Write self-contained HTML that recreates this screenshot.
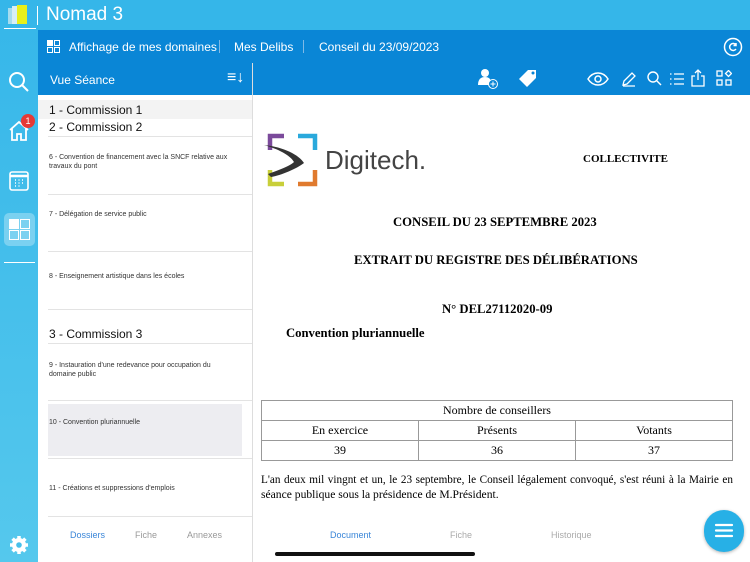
<!DOCTYPE html>
<html><head><meta charset="utf-8"><style>
*{margin:0;padding:0;box-sizing:border-box}
body{width:750px;height:562px;overflow:hidden;position:relative;background:#fff;font-family:"Liberation Sans",sans-serif}
.a{position:absolute}
.side{left:0;top:0;width:38px;height:562px;background:linear-gradient(#35b6e9,#55c8ed)}
.top{left:38px;top:0;width:712px;height:30px;background:#35b6e9}
.nav{left:38px;top:30px;width:712px;height:33px;background:#0a86d6;color:#fff;font-size:12px}
.tb{left:38px;top:63px;width:712px;height:32px;background:#0a86d6}
.li{color:#333;font-size:7px;line-height:9px}
.sep{height:1px;background:#e3e3e3;left:48px;width:204px}
.h{font-size:12px;color:#111;left:49px}
.doc{font-family:"Liberation Serif",serif;color:#000;white-space:nowrap}
td{border:1px solid #999;text-align:center;font-family:"Liberation Serif",serif;font-size:12px;height:20px}
table{border-collapse:collapse}
</style></head><body>
<div class="a side"></div>
<div class="a top"></div>
<div class="a" style="left:8px;top:8px;width:6px;height:16px;background:#a6dcef"></div>
<div class="a" style="left:12px;top:6px;width:8px;height:18px;background:#d7eef6"></div>
<div class="a" style="left:17px;top:5px;width:10px;height:19px;background:#e8ef1a"></div>
<div class="a" style="left:4px;top:28px;width:32px;height:1px;background:#fff"></div>
<div class="a" style="left:37px;top:6px;width:1px;height:19px;background:#fff"></div>
<div class="a" style="left:46px;top:4px;color:#fff;font-size:19px">Nomad 3</div>
<div class="a nav"></div>
<svg class="a" style="left:47px;top:40px" width="13" height="13" viewBox="0 0 13 13" fill="none" stroke="#fff" stroke-width="1"><rect x="0.5" y="0.5" width="5" height="5" fill="#fff"/><rect x="7.5" y="0.5" width="5" height="5"/><rect x="0.5" y="7.5" width="5" height="5"/><rect x="7.5" y="7.5" width="5" height="5"/></svg>
<div class="a" style="left:69px;top:40px;color:#fff;font-size:12px">Affichage de mes domaines</div>
<div class="a" style="left:219px;top:40px;width:1px;height:13px;background:#7fb9e6"></div>
<div class="a" style="left:234px;top:40px;color:#fff;font-size:12px">Mes Delibs</div>
<div class="a" style="left:303px;top:40px;width:1px;height:13px;background:#7fb9e6"></div>
<div class="a" style="left:319px;top:40px;color:#fff;font-size:12px">Conseil du 23/09/2023</div>
<svg class="a" style="left:723px;top:37px" width="20" height="20" viewBox="0 0 20 20" fill="none" stroke="#fff" stroke-width="1.5"><circle cx="10" cy="10" r="8.5"/><path d="M13 8a3.5 3.5 0 1 0 0 4M13 6v2.5h-2.5"/></svg>
<div class="a tb"></div>
<div class="a" style="left:252px;top:63px;width:1px;height:499px;background:#ddd"></div>
<div class="a" style="left:50px;top:73px;color:#fff;font-size:12px">Vue Séance</div>
<div class="a" style="left:227px;top:70px;color:#fff;font-size:16px;line-height:16px">≡↓</div>
<svg class="a" style="left:477px;top:68px" width="22" height="22" viewBox="0 0 22 22" fill="#fff"><circle cx="8" cy="5" r="4"/><path d="M1 17c0-6 3-8 7-8s6 2 6 6v2z"/><circle cx="16" cy="16" r="4.5" fill="#0a86d6" stroke="#fff"/><path d="M16 13.5v5M13.5 16h5" stroke="#fff"/></svg>
<svg class="a" style="left:518px;top:68px" width="22" height="22" viewBox="0 0 22 22" fill="#fff"><path d="M10 2h8v8L9 19 1 11z"/><circle cx="15" cy="5" r="1.5" fill="#0a86d6"/></svg>
<svg class="a" style="left:587px;top:71px" width="22" height="16" viewBox="0 0 22 16" fill="none" stroke="#fff" stroke-width="1.5"><path d="M1 8c5-8 15-8 20 0-5 8-15 8-20 0z"/><circle cx="11" cy="8" r="3"/></svg>
<svg class="a" style="left:621px;top:71px" width="16" height="16" viewBox="0 0 16 16" fill="none" stroke="#fff" stroke-width="1.3"><path d="M2 14l1-4 8-8 3 3-8 8zM2 15h12"/></svg>
<svg class="a" style="left:647px;top:71px" width="15" height="15" viewBox="0 0 15 15" fill="none" stroke="#fff" stroke-width="1.4"><circle cx="6" cy="6" r="5"/><path d="M10 10l4 4"/></svg>
<svg class="a" style="left:669px;top:72px" width="15" height="14" viewBox="0 0 15 14" fill="none" stroke="#fff" stroke-width="1.2"><path d="M5 2h10M5 7h10M5 12h10M1 2h1.5M1 7h1.5M1 12h1.5"/></svg>
<svg class="a" style="left:691px;top:69px" width="14" height="18" viewBox="0 0 14 18" fill="none" stroke="#fff" stroke-width="1.3"><path d="M4 7H1v10h12V7h-3M7 11V1M4 4l3-3 3 3"/></svg>
<svg class="a" style="left:716px;top:70px" width="16" height="16" viewBox="0 0 16 16" fill="none" stroke="#fff" stroke-width="1.3"><rect x="1" y="1" width="5" height="5"/><rect x="1" y="10" width="5" height="5"/><rect x="10" y="10" width="5" height="5"/><path d="M12.5 0.5l3 3-3 3-3-3z"/></svg>
<svg class="a" style="left:8px;top:71px" width="22" height="22" viewBox="0 0 22 22" fill="none" stroke="#fff" stroke-width="2"><circle cx="9" cy="9" r="7"/><path d="M14 14l6 6"/></svg>
<svg class="a" style="left:8px;top:120px" width="22" height="22" viewBox="0 0 22 22" fill="none" stroke="#fff" stroke-width="1.8"><path d="M2 10l9-8 9 8M4 8v12h5v-6h4v6h5V8"/></svg>
<div class="a" style="left:21px;top:114px;width:14px;height:14px;border-radius:7px;background:#e53935;color:#fff;font-size:9px;text-align:center;line-height:14px">1</div>
<svg class="a" style="left:9px;top:170px" width="20" height="21" viewBox="0 0 20 21" fill="none" stroke="#fff" stroke-width="1.6"><rect x="1" y="2" width="18" height="18" rx="2"/><path d="M1 6h18" stroke-width="2.5"/><path d="M6 10h1M9.5 10h1M13 10h1M6 13h1M9.5 13h1M13 13h1M6 16h1M9.5 16h1" stroke-width="1.5"/></svg>
<div class="a" style="left:4px;top:213px;width:31px;height:33px;border-radius:5px;background:rgba(255,255,255,.3)"></div>
<svg class="a" style="left:9px;top:219px" width="21" height="21" viewBox="0 0 21 21" fill="none" stroke="#fff" stroke-width="1"><rect x="0.5" y="0.5" width="9" height="9" fill="#fff"/><rect x="11.5" y="0.5" width="9" height="9"/><rect x="0.5" y="11.5" width="9" height="9"/><rect x="11.5" y="11.5" width="9" height="9"/></svg>
<div class="a" style="left:4px;top:262px;width:31px;height:1px;background:#fff"></div>
<svg class="a" style="left:9px;top:535px" width="20" height="20" viewBox="0 0 20 20"><g fill="#fff"><circle cx="10" cy="10" r="7"/><g stroke="#fff" stroke-width="3.5"><path d="M10 1v18M1 10h18M3.6 3.6l12.8 12.8M16.4 3.6L3.6 16.4"/></g></g><circle cx="10" cy="10" r="2.8" fill="#48c0eb"/></svg>
<div class="a" style="left:38px;top:95px;width:214px;height:467px;background:#fff"></div>
<div class="a" style="left:38px;top:100px;width:214px;height:19px;background:#f3f3f3"></div>
<div class="a h" style="top:103px">1 - Commission 1</div>
<div class="a h" style="top:120px">2 - Commission 2</div>
<div class="a sep" style="top:136px"></div>
<div class="a li" style="left:49px;top:153px;width:190px">6 - Convention de financement avec la SNCF relative aux travaux du pont</div>
<div class="a sep" style="top:194px"></div>
<div class="a li" style="left:49px;top:210px">7 - Délégation de service public</div>
<div class="a sep" style="top:251px"></div>
<div class="a li" style="left:49px;top:272px">8 - Enseignement artistique dans les écoles</div>
<div class="a sep" style="top:309px"></div>
<div class="a h" style="top:327px">3 - Commission 3</div>
<div class="a sep" style="top:343px"></div>
<div class="a li" style="left:49px;top:361px;width:175px">9 - Instauration d'une redevance pour occupation du domaine public</div>
<div class="a sep" style="top:400px"></div>
<div class="a" style="left:48px;top:404px;width:194px;height:52px;background:#ededf1"></div>
<div class="a li" style="left:49px;top:418px">10 - Convention pluriannuelle</div>
<div class="a sep" style="top:458px"></div>
<div class="a li" style="left:49px;top:484px">11 - Créations et suppressions d'emplois</div>
<div class="a sep" style="top:516px"></div>
<div class="a" style="left:70px;top:530px;font-size:9px;color:#3a86d8">Dossiers</div>
<div class="a" style="left:135px;top:530px;font-size:9px;color:#999">Fiche</div>
<div class="a" style="left:187px;top:530px;font-size:9px;color:#999">Annexes</div>
<svg class="a" style="left:262px;top:132px" width="60" height="56" viewBox="0 0 60 56" fill="none" stroke-width="4.5"><path d="M22 4H8v14" stroke="#7b4a9b"/><path d="M36 4h17v14" stroke="#2aa9dc"/><path d="M8 38v14h14" stroke="#c8cf3a"/><path d="M53 38v14H36" stroke="#e07a2e"/><path d="M2 13c20 2 35 10 40 18-8 6-22 12-33 14l-3-3c11-4 22-8 26-12C28 23 16 17 2 13z" fill="#333" stroke="none"/></svg>
<div class="a" style="left:325px;top:145px;font-size:26px;color:#444">Digitech.</div>
<div class="a doc" style="left:583px;top:153px;font-size:11px;font-weight:bold">COLLECTIVITE</div>
<div class="a doc" style="left:393px;top:215px;font-size:12.7px;font-weight:bold">CONSEIL DU 23 SEPTEMBRE 2023</div>
<div class="a doc" style="left:354px;top:253px;font-size:12.7px;font-weight:bold">EXTRAIT DU REGISTRE DES DÉLIBÉRATIONS</div>
<div class="a doc" style="left:442px;top:302px;font-size:12.7px;font-weight:bold">N° DEL27112020-09</div>
<div class="a doc" style="left:286px;top:326px;font-size:12.7px;font-weight:bold">Convention pluriannuelle</div>
<table class="a" style="left:261px;top:400px;width:472px">
<tr><td colspan="3">Nombre de conseillers</td></tr>
<tr><td style="width:157px">En exercice</td><td style="width:157px">Présents</td><td>Votants</td></tr>
<tr><td>39</td><td>36</td><td>37</td></tr></table>
<div class="a" style="left:261px;top:473px;width:472px;font-family:'Liberation Serif',serif;font-size:11.2px;line-height:14.5px;text-align:justify;text-align-last:justify;color:#000">L'an deux mil vingnt et un, le 23 septembre, le Conseil légalement convoqué, s'est réuni à la Mairie en</div>
<div class="a" style="left:261px;top:487.5px;font-family:'Liberation Serif',serif;font-size:11.6px;line-height:14.5px;color:#000;white-space:nowrap">séance publique sous la présidence de M.Président.</div>
<div class="a" style="left:330px;top:530px;font-size:9px;color:#3a86d8">Document</div>
<div class="a" style="left:450px;top:530px;font-size:9px;color:#aaa">Fiche</div>
<div class="a" style="left:551px;top:530px;font-size:9px;color:#aaa">Historique</div>
<div class="a" style="left:275px;top:552px;width:200px;height:4px;border-radius:2px;background:#111"></div>
<div class="a" style="left:704px;top:510px;width:40px;height:42px;border-radius:21px;background:#27b0e6;box-shadow:0 1px 3px rgba(0,0,0,.3)"></div>
<svg class="a" style="left:714px;top:523px" width="20" height="15" viewBox="0 0 20 15" stroke="#fff" stroke-width="2.2" stroke-linecap="round"><path d="M2 2h16M2 7.5h16M2 13h16"/></svg>
</body></html>
